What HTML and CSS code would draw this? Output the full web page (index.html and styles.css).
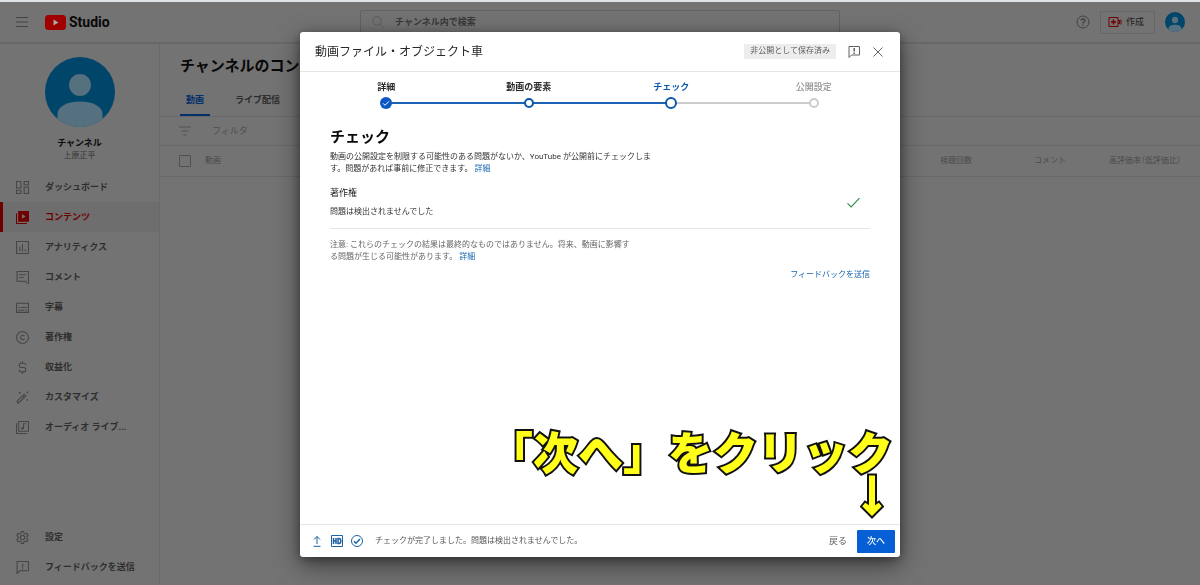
FILE: index.html
```html
<!DOCTYPE html>
<html lang="ja">
<head>
<meta charset="utf-8">
<title>チャンネルのコンテンツ - YouTube Studio</title>
<link rel="stylesheet" href="styles.css">
</head>
<body>
<header class="topbar">
  <div class="topbar-start">
    <button class="icon-button" aria-label="メニュー"><svg class="icon" viewBox="0 0 12 12"><path d="M0 1.500h12M0 6h12M0 10.500h12"/></svg></button>
    <a class="brand" href="#" aria-label="Studio">
      <svg class="brand-mark" viewBox="0 0 21 15"><rect width="21" height="15" rx="3.500" fill="#a00000"/><path d="M8.500 4.500v6l5-3z" fill="#aaa"/></svg>
      <span>Studio</span>
    </a>
  </div>
  <label class="search">
    <svg class="icon" viewBox="0 0 12 12"><circle cx="5" cy="5" r="4.300"/><path d="M8 8l3.700 3.700"/></svg>
    <input type="search" placeholder="チャンネル内で検索" aria-label="チャンネル内で検索">
  </label>
  <div class="topbar-end">
    <button class="icon-button help" aria-label="ヘルプ"><svg viewBox="0 0 14 14"><circle cx="7" cy="7" r="6"/><path class="heavy" d="M5.200 5.600c0-2.300 3.600-2.300 3.600 0 0 1.300-1.800 1.300-1.800 2.800M7 9.400v1.200"/></svg></button>
    <button class="create"><svg viewBox="0 0 14 12"><path d="M1 1.500h9v9H1zM10 4.500h1.500v3H10M13 3.500v5"/><path class="heavy" d="M5.500 3.500v5M3 6h5"/></svg><span>作成</span></button>
    <button class="avatar small" aria-label="アカウント"><svg viewBox="0 0 70 70"><use href="#person"/></svg></button>
  </div>
</header>

<div class="workspace">
  <aside class="sidebar">
    <div class="profile">
      <a class="avatar large" href="#" aria-label="チャンネルを表示"><svg viewBox="0 0 70 70">
        <g id="person"><circle cx="35" cy="35" r="35" fill="#00466a"/><circle cx="35" cy="28" r="11" fill="#55707f"/><path d="M12.500 61.800V57c0-7 9-12.500 22.500-12.500S57.500 50 57.500 57v4.800A35 35 0 0 1 12.500 61.800z" fill="#55707f"/></g>
      </svg></a>
      <strong>チャンネル</strong>
      <span>上原正平</span>
    </div>
    <nav class="menu">
      <a href="#"><svg viewBox="0 0 12 12"><path d="M.5.5h4v6h-4zM7.500.5h4v3h-4zM.5 8.500h4v3h-4zM7.500 5.500h4v6h-4z"/></svg>ダッシュボード</a>
      <a class="active" href="#" aria-current="page"><svg viewBox="0 0 12 12"><path d="M.5 2v9.500H10"/><path class="solid" fill-rule="evenodd" d="M2 0h10v10H2zM5.500 2.800v4.400L9 5z"/></svg>コンテンツ</a>
      <a href="#"><svg viewBox="0 0 12 12"><path d="M.5.500h11v11H.5zM3.500 5v4.500M6 3v6.500M8.500 7.500v2"/></svg>アナリティクス</a>
      <a href="#"><svg viewBox="0 0 12 12"><path d="M1 .5h10.500v11L8.500 9.500H1zM3 3.500h6M3 6h4"/></svg>コメント</a>
      <a href="#"><svg viewBox="0 0 12 12"><path d="M.5 2h11v8.500H.5zM2 6h1.500M4.500 6H10M2 8.500h5.500M8.500 8.500H10"/></svg>字幕</a>
      <a href="#"><svg viewBox="0 0 12 12"><circle cx="6" cy="6" r="5.500"/><path d="M7.800 4.900c-.6-1.500-3.500-1.300-3.500 1.100s2.900 2.600 3.500 1.100"/></svg>著作権</a>
      <a href="#"><svg viewBox="0 0 12 12"><path d="M9 4V3.200Q9 2 7.500 2h-3Q3 2 3 4t1.500 2h3Q9 6 9 8t-1.500 2h-3Q3 10 3 8.800V8M6 .3V2M6 10v1.700"/></svg>収益化</a>
      <a href="#"><svg viewBox="0 0 12 12"><path d="M.7 9.800L7.500 3 9 4.500 2.200 11.300zM6 4.500L7.500 6M3.500 1v1.500M2.800 1.700h1.500M10.500.5V2M9.700 1.200h1.500M10.500 7.500V9M9.700 8.200h1.500"/></svg>カスタマイズ</a>
      <a href="#"><svg viewBox="0 0 12 12"><path d="M.5 2v9.500H10M2.500.5h9v9h-9zM7 6.500v-4h2"/><circle class="solid" cx="6" cy="6.800" r="1.200"/></svg>オーディオ ライブ...</a>
    </nav>
    <nav class="menu menu-bottom">
      <a href="#"><svg viewBox="0 0 12 12"><path d="M5 .5h2l.4 1.600 1.200.7 1.600-.5 1 1.700L10 5.200v1.600L11.200 8l-1 1.700-1.600-.5-1.200.7L7 11.500H5l-.4-1.600-1.200-.7-1.600.5-1-1.700L2 6.800V5.200L.8 4l1-1.700 1.600.5 1.200-.7z"/><circle cx="6" cy="6" r="2"/></svg>設定</a>
      <a href="#"><svg viewBox="0 0 12 12"><path d="M1 .5h10.500V9H3.500L1 11.500zM6.200 2.500V6M6.200 7v1"/></svg>フィードバックを送信</a>
    </nav>
  </aside>

  <main class="content">
    <h1>チャンネルのコンテンツ</h1>
    <nav class="tabs"><a class="selected" href="#">動画</a><a href="#">ライブ配信</a></nav>
    <label class="filter"><svg class="icon" viewBox="0 0 12 12"><path d="M0 2h12M2.500 6h7M4.500 10h3"/></svg><input type="text" placeholder="フィルタ" aria-label="フィルタ"></label>
    <table class="videos">
      <thead><tr>
        <th class="col-check"><input type="checkbox" aria-label="すべて選択"></th>
        <th class="col-video">動画</th>
        <th class="col-views">視聴回数</th>
        <th class="col-comments">コメント</th>
        <th class="col-rating">高評価率（低評価比）</th>
      </tr></thead>
    </table>
  </main>
</div>

<div class="overlay">
  <dialog class="dialog" open aria-labelledby="dialog-title">
    <header class="dialog-head">
      <h2 id="dialog-title">動画ファイル・オブジェクト車</h2>
      <span class="saved">非公開として保存済み</span>
      <button class="icon-button" aria-label="フィードバック"><svg class="icon" viewBox="0 0 12 12"><path d="M1 .5h10.500V9H3.500L1 11.500z"/><path class="heavy" d="M6.200 2v3.500M6.200 6.500V8"/></svg></button>
      <button class="icon-button" aria-label="閉じる"><svg class="icon" viewBox="0 0 12 12"><path d="M1.500 1.500l9 9M10.500 1.500l-9 9"/></svg></button>
    </header>

    <ol class="steps">
      <li class="step done"><button>詳細<span class="dot"><svg viewBox="0 0 12 12"><path d="M3 6.300l2 2 4-4"/></svg></span></button></li>
      <li class="step visited"><button>動画の要素<span class="dot"></span></button></li>
      <li class="step current" aria-current="step"><button>チェック<span class="dot"></span></button></li>
      <li class="step"><button>公開設定<span class="dot"></span></button></li>
    </ol>

    <section class="checks">
      <h3>チェック</h3>
      <p class="intro">動画の公開設定を制限する可能性のある問題がないか、YouTube が公開前にチェックしま<br>す。問題があれば事前に修正できます。 <a href="#">詳細</a></p>
      <div class="result">
        <div><h4>著作権</h4><p>問題は検出されませんでした</p></div>
        <svg viewBox="0 0 12 12"><path d="M.5 6.800l3.300 3.300L11.500 2"/></svg>
      </div>
      <p class="note">注意: これらのチェックの結果は最終的なものではありません。将来、動画に影響す<br>る問題が生じる可能性があります。 <a href="#">詳細</a></p>
      <a class="feedback" href="#">フィードバックを送信</a>
    </section>

    <footer class="dialog-foot">
      <svg viewBox="0 0 12 12"><path d="M6 9V1.500M3 4.500l3-3 3 3M2.500 11.300h7"/></svg>
      <svg viewBox="0 0 12 12"><path d="M.5.500h11v11H.5z"/><path class="heavy" d="M2.500 3v6M5 3v6M2.500 6H5M7 3.500v5h1q1.800 0 1.800-2.500T8 3.500z"/></svg>
      <svg viewBox="0 0 12 12"><circle cx="6" cy="6" r="5.500"/><path class="heavy" d="M3 6.200l2 2 4-4.200"/></svg>
      <span class="status">チェックが完了しました。問題は検出されませんでした。</span>
      <button class="back">戻る</button>
      <button class="next">次へ</button>
    </footer>

    <div class="callout">
      <span>「次へ」をクリック</span>
      <svg viewBox="0 0 24 46"><path d="M8 1.500h8v29l3-2 4 5-11 11-11-11 4-5 3 2z"/></svg>
    </div>
  </dialog>
</div>
</body>
</html>
```
FILE: styles.css
```css
* { box-sizing: border-box; }

body {
  margin: 0;
  min-height: 100vh;
  display: flex;
  flex-direction: column;
  border-top: 2px solid #dfe3e5;
  background: #737373;
  color: #2b2b2b;
  font: 9px/12px Roboto, "Noto Sans CJK JP", sans-serif;
}

h1, h2, h3, h4, p, ol { margin: 0; padding: 0; }
a { color: inherit; text-decoration: none; }
button { padding: 0; border: 0; background: none; color: inherit; font: inherit; }
input { min-width: 0; padding: 0; border: 0; outline: 0; background: none; color: inherit; font: inherit; }
svg { display: block; flex: none; fill: none; stroke: currentColor; stroke-width: 1; }
.icon { width: 12px; height: 12px; }
.heavy { stroke-width: 1.5; }
.solid { fill: currentColor; stroke: none; }

.topbar {
  height: 41px;
  padding: 0 15px;
  display: grid;
  grid-template-columns: 1fr 40vw 1fr;
  align-items: center;
  border-bottom: 1px solid #666;
  box-shadow: 0 1px 1px #6b6b6b;
  color: #444;
}
.topbar-start, .topbar-end { display: flex; align-items: center; }
.topbar-start { gap: 17px; padding-left: 1px; }
.topbar-end { justify-content: flex-end; gap: 10px; }
.brand { display: flex; align-items: center; gap: 3px; color: #080808; font: bold 14px/20px "Liberation Sans Narrow", Roboto, sans-serif; }
.brand-mark { width: 21px; height: 15px; stroke: none; }
.search {
  height: 24px;
  padding: 0 11px;
  display: flex;
  align-items: center;
  gap: 11px;
  border: 1px solid #626262;
  border-radius: 2px;
  color: #5d5d5d;
}
.search input { flex: 1; }
.search input::placeholder { color: #383838; font-weight: bold; opacity: 1; }
.help svg { width: 14px; height: 14px; }
.create {
  height: 23px;
  padding: 0 10px 0 7px;
  display: flex;
  align-items: center;
  gap: 4px;
  border: 1px solid #666;
  color: #222;
}
.create svg { width: 14px; height: 12px; color: #700000; }
.avatar { display: block; }
.avatar svg { width: 100%; height: 100%; stroke: none; }
.small { width: 20px; height: 20px; }
.large { width: 70px; height: 70px; margin-bottom: 10px; }

.workspace { flex: 1; display: flex; }
.sidebar { width: 160px; display: flex; flex-direction: column; border-right: 1px solid #696969; }
.profile { padding: 14px 0 9px; display: flex; flex-direction: column; align-items: center; }
.profile strong { line-height: 12px; color: #0c0c0c; }
.profile span { font-size: 8px; line-height: 14px; color: #333; }
.menu a {
  height: 30px;
  padding-left: 13px;
  display: flex;
  align-items: center;
  gap: 16px;
  border-left: 3px solid transparent;
  font-weight: bold;
  color: #2e2e2e;
}
.menu svg { width: 13px; height: 13px; color: #464646; }
.menu .active, .menu .active svg { color: #6f0000; }
.menu .active { border-color: #6f0000; background: #6e6e6e; }
.menu-bottom { margin-top: auto; padding-bottom: 3px; }

.content { flex: 1; min-width: 0; }
.content h1 { padding: 13px 20px 0; font-size: 15px; line-height: 20px; color: #080808; }
.tabs { height: 41px; padding: 8px 20px 0; display: flex; gap: 19px; border-bottom: 1px solid #696969; font-weight: bold; }
.tabs a { padding: 10px 6px 0; }
.tabs .selected { border-bottom: 2px solid #03306b; color: #03306b; }
.filter { height: 29px; padding-left: 19px; display: flex; align-items: center; gap: 21px; border-bottom: 1px solid #696969; color: #535353; }
.filter input::placeholder { color: #4f4f4f; opacity: 1; }
.videos { width: 100%; table-layout: fixed; border-collapse: collapse; color: #4b4b4b; font-size: 8px; }
.videos th { height: 30px; padding: 0; border-bottom: 1px solid #696969; font-weight: normal; text-align: right; white-space: nowrap; }
.videos .col-check { width: 45px; padding-left: 19px; text-align: left; }
.videos .col-video { text-align: left; }
.videos .col-views { width: 90px; }
.videos .col-comments { width: 94px; }
.videos .col-rating { width: 134px; padding-right: 19px; font-feature-settings: "halt"; }
.videos input { appearance: none; display: block; width: 12px; height: 12px; margin: 0; border: 1px solid #505050; border-radius: 1px; }

.overlay { position: fixed; inset: 32px 0 28px; display: flex; justify-content: center; }
.dialog {
  position: relative;
  width: 50%;
  height: 100%;
  margin: 0;
  padding: 0;
  display: flex;
  flex-direction: column;
  border: 0;
  border-radius: 3px;
  background: #fff;
  color: #333;
  box-shadow: 0 8px 24px rgba(0, 0, 0, .5), 0 2px 10px rgba(0, 0, 0, .3);
}
.dialog a { color: #1967b0; }
.dialog-head { height: 40px; padding: 0 16px 0 15px; display: flex; align-items: center; gap: 12px; border-bottom: 1px solid #e5e5e5; color: #606060; }
.dialog-head h2 { flex: 1; font-size: 12px; line-height: 18px; font-weight: normal; color: #282828; }
.saved { padding: 1px 6px 2px; background: #ededed; font-size: 8px; }

.steps { padding: 9px 15px 0; display: grid; grid-template-columns: repeat(4, 1fr); list-style: none; }
.step { position: relative; color: #909090; text-align: center; }
.step button { position: relative; z-index: 1; width: 100%; display: flex; flex-direction: column; align-items: center; font-weight: 500; }
.step + .step::before { content: ""; position: absolute; top: 21px; left: -50%; width: 100%; height: 2px; background: #ccc; }
.step.visited::before, .step.current::before { background: #1c62b5; }
.dot { width: 10px; height: 10px; margin: 5px 0 1px; border: 2px solid #ccc; border-radius: 50%; background: #fff; }
.done, .visited { color: #282828; }
.step.done button, .step.visited button, .step.current button { font-weight: bold; }
.visited .dot { border-color: #0b57ad; }
.step.current { color: #0b57ad; }
.current .dot, .done .dot { width: 12px; height: 12px; margin: 4px 0 0; border-color: #0b57ad; }
.done .dot { border: 0; background: #0b57c5; color: #fff; }
.dot svg { width: 12px; height: 12px; }

.checks { flex: 1; padding: 18px 30px 0; display: flex; flex-direction: column; font-size: 8px; line-height: 12px; }
.checks h3 { margin-bottom: 4px; font-size: 15px; line-height: 20px; color: #080808; }
.result { margin: 12px 0 10px; padding-bottom: 10px; display: flex; align-items: center; justify-content: space-between; border-bottom: 1px solid #e5e5e5; }
.result h4 { margin-bottom: 6px; font-size: 9px; line-height: 13px; font-weight: normal; color: #222; }
.result svg { width: 13px; height: 13px; margin-right: 10px; color: #2c8a43; }
.note { color: #666; }
.feedback { margin-top: 6px; align-self: flex-end; }

.dialog-foot { height: 33px; padding: 0 5px 0 11px; display: flex; align-items: center; gap: 8px; border-top: 1px solid #e5e5e5; color: #1c62a5; font-size: 8px; }
.dialog-foot svg { width: 12px; height: 12px; }
.status { flex: 1; margin-left: 4px; color: #555; }
.back, .next { font-size: 9px; }
.back { margin-right: 2px; color: #606060; }
.next { width: 38px; height: 23px; border-radius: 1px; background: #065fd4; color: #fff; font-weight: 500; }

.callout { position: absolute; right: 7px; bottom: 38px; display: flex; flex-direction: column; align-items: flex-end; }
.callout span {
  font: 900 45px/45px "Noto Sans CJK JP", sans-serif;
  color: #ffff1a;
  white-space: nowrap;
  -webkit-text-stroke: 4px #111;
  paint-order: stroke fill;
  stroke-linejoin: round;
}
.callout svg { width: 24px; height: 46px; margin-right: 9px; fill: #ffff1a; stroke: #111; stroke-width: 2; }
```
